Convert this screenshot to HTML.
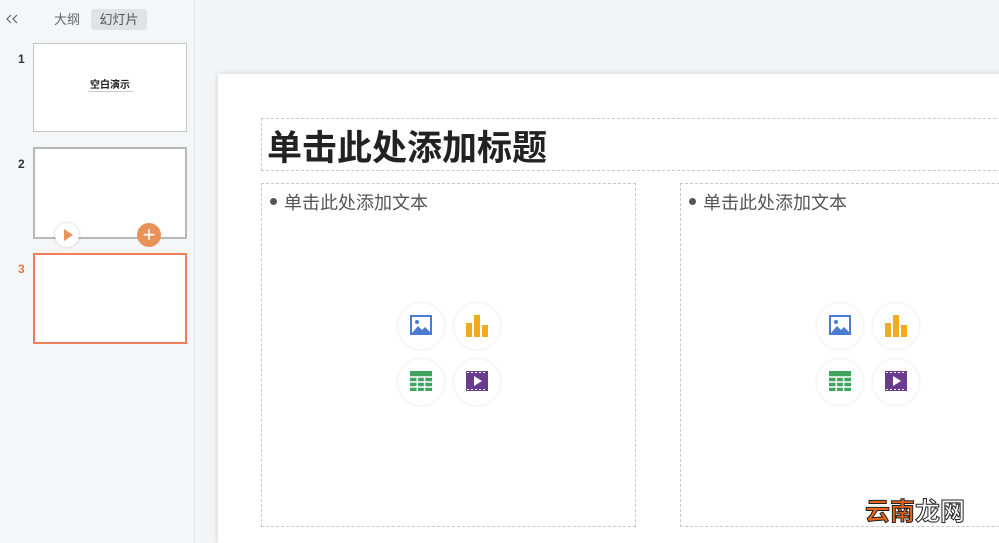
<!DOCTYPE html>
<html><head><meta charset="utf-8"><style>
*{margin:0;padding:0;box-sizing:border-box}
html,body{width:999px;height:543px;overflow:hidden}
body{background:#f3f4f6;font-family:"Liberation Sans","Noto Sans CJK SC",sans-serif;position:relative}
.side{position:absolute;left:0;top:0;width:195px;height:543px;background:#f5f6f8;border-right:1px solid #e2e4e8}
.a{position:absolute}
.num{position:absolute;left:18px;font-size:12px;font-weight:bold;color:#333}
.th{position:absolute;left:33px;width:154px;background:#fff}
.slide{position:absolute;left:218px;top:74px;width:800px;height:469px;background:#fff;box-shadow:0 0 6px rgba(0,0,0,.15)}
.box{position:absolute;border:1px dashed #c8c8c8}
.ic{position:absolute;width:46px;height:46px;border-radius:50%;background:#fff;box-shadow:0 0 3px rgba(0,0,0,.12);display:flex;align-items:center;justify-content:center}
.bt{position:absolute;font-size:18px;color:#555;white-space:nowrap}
</style></head><body>
<div class="side">
 <svg class="a" style="left:5px;top:13px" width="14" height="12"><path d="M6 2L2 6L6 10M12 2L8 6L12 10" stroke="#666" stroke-width="1.2" fill="none"/></svg>
 <div class="a" style="left:54px;top:9px;font-size:13px;color:#666">大纲</div>
 <div class="a" style="left:91px;top:9px;width:56px;height:21px;background:#dfe2e7;border-radius:3px;font-size:13px;color:#555;text-align:center;line-height:21px">幻灯片</div>
 <div class="num" style="top:52px">1</div>
 <div class="th" style="top:43px;height:89px;border:1px solid #c4c4c4">
   <div class="a" style="left:0;right:0;top:32px;text-align:center;font-size:10px;font-weight:bold;color:#222">空白演示</div>
   <div class="a" style="left:54px;top:47px;width:45px;height:1px;background:#ccc"></div>
 </div>
 <div class="num" style="top:157px">2</div>
 <div class="th" style="top:147px;height:92px;border:2px solid #b8b8b8"></div>
 <div class="a" style="left:55px;top:223px;width:24px;height:24px;border-radius:50%;background:#fff;box-shadow:0 0 3px rgba(0,0,0,.2)"><div class="a" style="left:9px;top:6px;border-left:9px solid #e8925a;border-top:6px solid transparent;border-bottom:6px solid transparent"></div></div>
 <div class="a" style="left:137px;top:223px;width:24px;height:24px;border-radius:50%;background:#e8925a;color:#fff;font-size:22px;line-height:23px;text-align:center">+</div>
 <div class="num" style="top:262px;color:#e07a3a">3</div>
 <div class="th" style="top:253px;height:91px;border:2px solid #ef7f5a"></div>
</div>
<div class="slide">
 <div class="box" style="left:43px;top:44px;width:760px;height:53px"></div>
 <div class="a" style="left:49px;top:46px;font-size:35px;font-weight:bold;color:#222;white-space:nowrap">单击此处添加标题</div>
 <div class="box" style="left:43px;top:109px;width:375px;height:344px"></div>
 <div class="box" style="left:462px;top:109px;width:360px;height:344px"></div>
 <div class="a" style="left:52px;top:124px;width:7px;height:7px;border-radius:50%;background:#555"></div>
 <div class="bt" style="left:66px;top:115px">单击此处添加文本</div>
 <div class="a" style="left:471px;top:124px;width:7px;height:7px;border-radius:50%;background:#555"></div>
 <div class="bt" style="left:485px;top:115px">单击此处添加文本</div>
</div>
<svg width="0" height="0" style="position:absolute"><defs>
<g id="img"><rect x="0" y="0" width="22" height="20" fill="#4a7bd4"/><rect x="2" y="2" width="18" height="16" fill="#fff"/><circle cx="7" cy="7" r="2" fill="#4a7bd4"/><path d="M2 18 L8 11 L12 15 L15 12 L20 17 L20 18Z" fill="#4a7bd4"/></g>
<g id="bar"><rect x="0" y="8" width="6" height="14" fill="#f0ab1e"/><rect x="8" y="0" width="6" height="22" fill="#f0ab1e"/><rect x="16" y="10" width="6" height="12" fill="#f0ab1e"/></g>
<g id="tab"><rect x="0" y="0" width="22" height="20" fill="#3fa45e"/><path d="M0 6H22M0 11H22M0 16H22M7.3 6V20M14.6 6V20" stroke="#fff" stroke-width="1.5"/></g>
<g id="vid"><rect x="0" y="0" width="22" height="20" fill="#6a3c8f"/><path d="M8 5 L16 10 L8 15Z" fill="#fff"/><path d="M1 1.5H21M1 18.5H21" stroke="#fff" stroke-dasharray="2 2" stroke-width="1"/></g>
</defs></svg>
<div class="ic" style="left:398px;top:303px"><svg width="22" height="22"><use href="#img"/></svg></div>
<div class="ic" style="left:454px;top:303px"><svg width="22" height="22"><use href="#bar"/></svg></div>
<div class="ic" style="left:398px;top:359px"><svg width="22" height="22"><use href="#tab"/></svg></div>
<div class="ic" style="left:454px;top:359px"><svg width="22" height="22"><use href="#vid"/></svg></div>
<div class="ic" style="left:817px;top:303px"><svg width="22" height="22"><use href="#img"/></svg></div>
<div class="ic" style="left:873px;top:303px"><svg width="22" height="22"><use href="#bar"/></svg></div>
<div class="ic" style="left:817px;top:359px"><svg width="22" height="22"><use href="#tab"/></svg></div>
<div class="ic" style="left:873px;top:359px"><svg width="22" height="22"><use href="#vid"/></svg></div>
<div class="a" style="left:865px;top:498px;font-size:25px;font-weight:bold;white-space:nowrap;line-height:28px;-webkit-text-stroke:1px #222"><span style="color:#e8641a">云南</span><span style="color:#fff">龙网</span></div>
</body></html>
